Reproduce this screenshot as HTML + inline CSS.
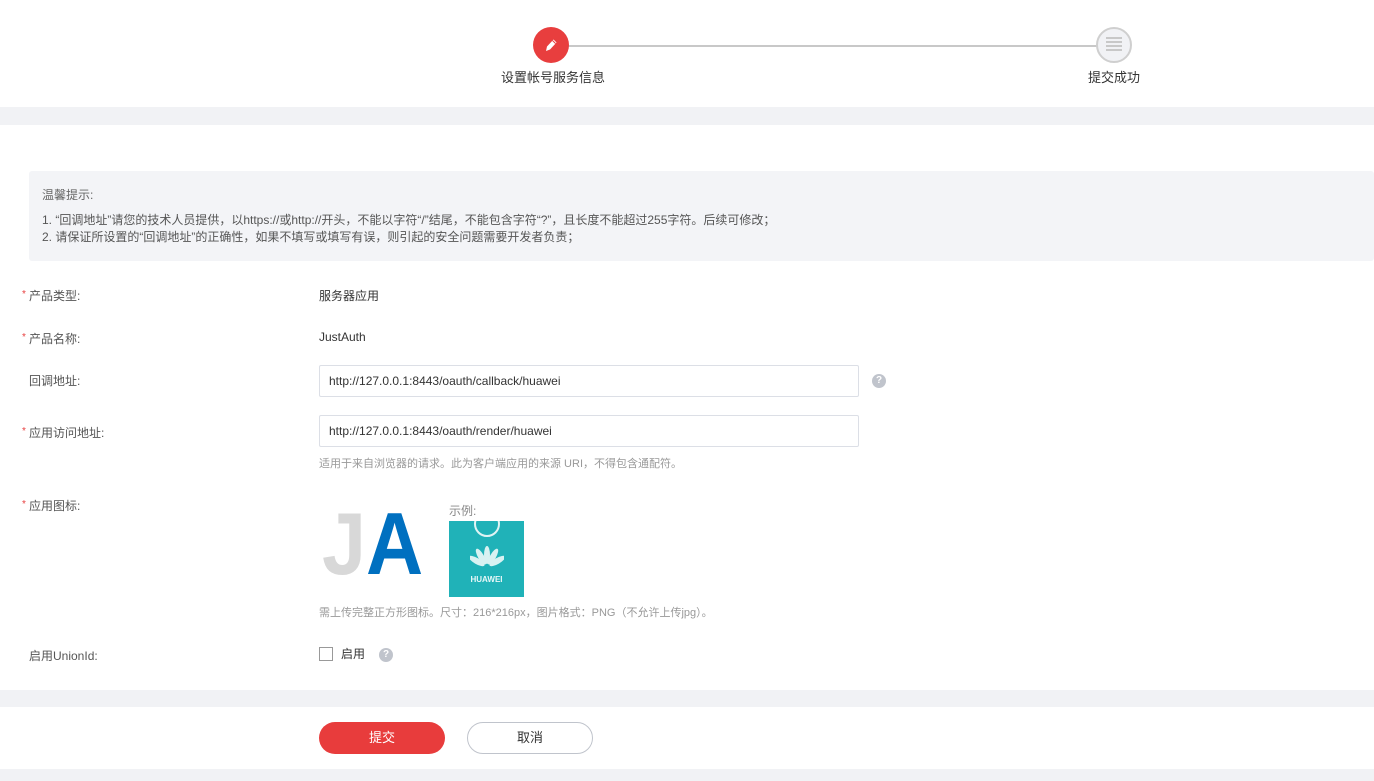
<!DOCTYPE html>
<html><head><meta charset="utf-8"><style>
*{margin:0;padding:0;box-sizing:border-box}
body{width:1374px;height:781px;background:#f1f2f5;font-family:"Liberation Sans","Noto Sans CJK SC",sans-serif;font-size:12px;color:#333;position:relative;overflow:hidden}
.a{position:absolute}
.lbl{position:absolute;left:29px;color:#555;font-size:12px}
.lbl i{position:absolute;left:-7px;top:2px;color:#e84040;font-style:normal;font-size:10px}
.inp{position:absolute;left:319px;width:540px;height:32px;border:1px solid #dcdfe6;border-radius:2px;padding-left:9px;line-height:30px;font-size:12px;color:#333;background:#fff}
.q{position:absolute;width:14px;height:14px;border-radius:50%;background:#c0c4cc;color:#fff;font-size:10px;font-weight:bold;text-align:center;line-height:14px}
</style></head><body>
<div class="a" style="left:0;top:0;width:1374px;height:107px;background:#fff"></div>
<div class="a" style="left:551px;top:45px;width:563px;height:2px;background:#c8c8c8"></div>
<div class="a" style="left:533px;top:27px;width:36px;height:36px;border-radius:50%;background:#e83e3e"></div>
<svg class="a" style="left:541px;top:35px" width="20" height="20" viewBox="0 0 20 20"><path d="M5 16 L6 11.5 L12.5 4.5 L15.5 7.5 L9 14.5 Z" fill="#fff"/><path d="M11.5 5.5 L14.5 8.5" stroke="#e83e3e" stroke-width="1"/></svg>
<div class="a" style="left:1096px;top:27px;width:36px;height:36px;border-radius:50%;background:#f1f2f5;border:2px solid #cfcfcf"></div>
<div class="a" style="left:1106px;top:37px;width:16px;height:2px;background:#c8c8c8;box-shadow:0 4px 0 #c8c8c8,0 8px 0 #c8c8c8,0 12px 0 #c8c8c8"></div>
<div class="a" style="left:501px;top:67px;font-size:13px;color:#333">设置帐号服务信息</div>
<div class="a" style="left:1088px;top:67px;font-size:13px;color:#333">提交成功</div>

<div class="a" style="left:0;top:125px;width:1374px;height:565px;background:#fff"></div>
<div class="a" style="left:29px;top:171px;width:1345px;height:90px;background:#f3f4f7;border-radius:3px;color:#555;font-size:12px">
<div class="a" style="left:13px;top:15px;color:#666">温馨提示:</div>
<div class="a" style="left:13px;top:41px;line-height:17px;white-space:nowrap">1. “回调地址”请您的技术人员提供，以https://或http://开头，不能以字符“/”结尾，不能包含字符“?”，且长度不能超过255字符。后续可修改；<br>2. 请保证所设置的“回调地址”的正确性，如果不填写或填写有误，则引起的安全问题需要开发者负责；</div>
</div>
<div class="lbl" style="top:287px"><i>*</i>产品类型:</div>
<div class="a" style="left:319px;top:287px">服务器应用</div>
<div class="lbl" style="top:330px"><i>*</i>产品名称:</div>
<div class="a" style="left:319px;top:330px">JustAuth</div>
<div class="lbl" style="top:372px">回调地址:</div>
<div class="inp" style="top:365px">http://127.0.0.1:8443/oauth/callback/huawei</div>
<div class="q" style="left:872px;top:374px">?</div>
<div class="lbl" style="top:424px"><i>*</i>应用访问地址:</div>
<div class="inp" style="top:415px">http://127.0.0.1:8443/oauth/render/huawei</div>
<div class="a" style="left:319px;top:455px;color:#999;font-size:11px">适用于来自浏览器的请求。此为客户端应用的来源 URI，不得包含通配符。</div>
<div class="lbl" style="top:497px"><i>*</i>应用图标:</div>
<div class="a" style="left:322px;top:494px;font-size:88px;line-height:100px;font-weight:bold;font-family:'Liberation Sans',sans-serif;letter-spacing:0px;transform:scaleX(0.9);transform-origin:left"><span style="color:#d8d8d8">J</span><span style="color:#0070c0">A</span></div>
<div class="a" style="left:449px;top:502px;color:#888;font-size:12px">示例:</div>
<div class="a" style="left:449px;top:521px;width:75px;height:76px;background:#20b2b8;overflow:hidden">
<div class="a" style="left:25px;top:-10px;width:26px;height:26px;border:2px solid #e0f4f4;border-radius:50%"></div>
<svg class="a" style="left:21px;top:24px" width="34" height="26" viewBox="0 0 34 26"><g fill="#d8f2f2"><ellipse cx="17" cy="10" rx="3" ry="9"/><ellipse cx="17" cy="10" rx="3" ry="9" transform="rotate(-30 17 22)"/><ellipse cx="17" cy="10" rx="3" ry="9" transform="rotate(30 17 22)"/><ellipse cx="17" cy="10" rx="3" ry="9" transform="rotate(-60 17 22)"/><ellipse cx="17" cy="10" rx="3" ry="9" transform="rotate(60 17 22)"/></g></svg>
<div class="a" style="left:0;top:54px;width:75px;text-align:center;color:#e8f8f8;font-size:8px;font-weight:bold">HUAWEI</div>
</div>
<div class="a" style="left:319px;top:604px;color:#999;font-size:11px">需上传完整正方形图标。尺寸：216*216px，图片格式：PNG（不允许上传jpg）。</div>
<div class="lbl" style="top:647px">启用UnionId:</div>
<div class="a" style="left:319px;top:647px;width:14px;height:14px;border:1px solid #999;background:#fff"></div>
<div class="a" style="left:341px;top:645px;color:#333">启用</div>
<div class="q" style="left:379px;top:648px">?</div>

<div class="a" style="left:0;top:707px;width:1374px;height:62px;background:#fff"></div>
<div class="a" style="left:319px;top:722px;width:126px;height:32px;border-radius:16px;background:#e83c3c;color:#fff;text-align:center;line-height:32px;font-size:13px">提交</div>
<div class="a" style="left:467px;top:722px;width:126px;height:32px;border-radius:16px;background:#fff;border:1px solid #c0c4cc;color:#333;text-align:center;line-height:30px;font-size:13px">取消</div>
</body></html>
